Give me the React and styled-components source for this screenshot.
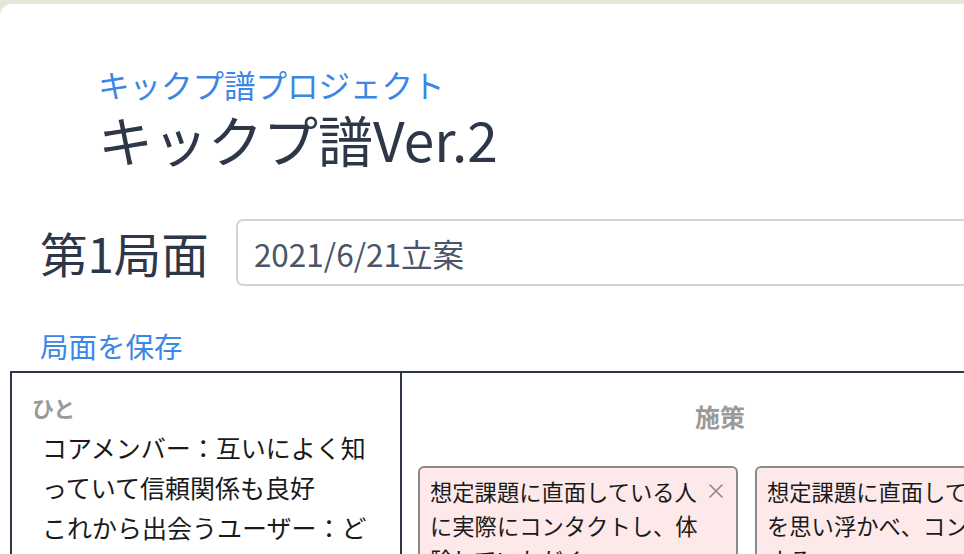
import React from "react";
import styled, { createGlobalStyle } from "styled-components";

const Global = createGlobalStyle`
  html, body { margin: 0; padding: 0; }
  body {
    background: #e8e6d9;
    overflow: hidden;
    font-family: "Noto Sans CJK JP", "Noto Sans", sans-serif;
  }
`;

const Panel = styled.div`
  margin-top: 4px;
  width: 1080px;
  min-height: 560px;
  background: #ffffff;
  border-top-left-radius: 12px;
  box-sizing: border-box;
`;

const Header = styled.header`
  padding: 61px 0 0 98px;
`;

const Subtitle = styled.div`
  color: #3b86e6;
  font-size: 31.5px;
  line-height: 38px;
`;

const Title = styled.h1`
  margin: 3px 0 0;
  color: #2d3748;
  font-size: 55px;
  font-weight: 400;
  line-height: 64px;
`;

const PhaseRow = styled.div`
  display: flex;
  align-items: center;
  gap: 27px;
  padding-left: 40px;
  margin-top: 48px;
`;

const PhaseTitle = styled.h2`
  margin: 0;
  font-size: 47.5px;
  font-weight: 400;
  color: #2d3748;
  white-space: nowrap;
`;

const PhaseInput = styled.div`
  flex: 1;
  height: 67px;
  box-sizing: border-box;
  border: 2px solid #cfd5dc;
  border-radius: 7px;
  display: flex;
  align-items: center;
  padding-left: 16px;
  font-size: 31.5px;
  color: #4a5568;
`;

const SaveLink = styled.a`
  display: block;
  margin: 41px 0 0 40px;
  font-size: 28.5px;
  line-height: 36px;
  color: #3b86e6;
  cursor: pointer;
`;

const Table = styled.div`
  margin: 7px 0 0 10px;
  width: 1026px;
  display: grid;
  grid-template-columns: 390px minmax(0, 1fr);
  border-top: 2px solid #2d3748;
  border-left: 2px solid #2d3748;
  min-height: 300px;
`;

const LeftCol = styled.div`
  border-right: 2px solid #2d3748;
  padding: 19px 22px 0 20px;
`;

const SectionLabel = styled.div`
  color: #9a9a9a;
  font-weight: 700;
  font-size: 22px;
  line-height: 30px;
  text-align: ${(p) => (p.$center ? "center" : "left")};
`;

const Item = styled.p`
  margin: 0;
  padding-left: 10px;
  font-size: 25px;
  line-height: 40px;
  color: #1a1a1a;
  &:first-of-type { margin-top: 5px; }
`;

const RightCol = styled.div`
  padding: 25px 16px 0 16px;
`;

const PlanLabel = styled(SectionLabel)`
  font-size: 25px;
  line-height: 36px;
`;

const Cards = styled.div`
  display: flex;
  gap: 17px;
  margin-top: 32px;
`;

const Card = styled.div`
  position: relative;
  flex: 0 0 320px;
  box-sizing: border-box;
  background: #fde9e9;
  border: 2px solid #8a8a8a;
  border-radius: 6px;
  padding: 6px 38px 10px 10px;
  font-size: 22.3px;
  line-height: 34px;
  color: #1a1a1a;
`;

const Close = styled.button`
  position: absolute;
  top: 15px;
  right: 12px;
  width: 16px;
  height: 16px;
  padding: 0;
  border: none;
  background: transparent;
  display: flex;
  cursor: pointer;
`;

function XIcon() {
  return (
    <svg width="16" height="16" viewBox="0 0 16 16" fill="none">
      <path d="M2 2 L14 14 M14 2 L2 14" stroke="#8a8a8a" strokeWidth="1.6" strokeLinecap="round" />
    </svg>
  );
}

export default function App() {
  return (
    <>
      <Global />
      <Panel>
        <Header>
          <Subtitle>キックプ譜プロジェクト</Subtitle>
          <Title>キックプ譜Ver.2</Title>
        </Header>
        <PhaseRow>
          <PhaseTitle>第1局面</PhaseTitle>
          <PhaseInput>2021/6/21立案</PhaseInput>
        </PhaseRow>
        <SaveLink>局面を保存</SaveLink>
        <Table>
          <LeftCol>
            <SectionLabel>ひと</SectionLabel>
            <Item>コアメンバー：互いによく知っていて信頼関係も良好</Item>
            <Item>これから出会うユーザー：どんな人かはまだ分からない</Item>
          </LeftCol>
          <RightCol>
            <PlanLabel $center>施策</PlanLabel>
            <Cards>
              <Card>
                想定課題に直面している人に実際にコンタクトし、体験していただく
                <Close aria-label="削除"><XIcon /></Close>
              </Card>
              <Card>
                想定課題に直面している人を思い浮かべ、コンタクトする
                <Close aria-label="削除"><XIcon /></Close>
              </Card>
            </Cards>
          </RightCol>
        </Table>
      </Panel>
    </>
  );
}
